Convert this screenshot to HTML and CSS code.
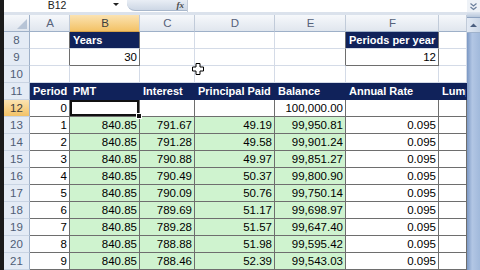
FILE: index.html
```html
<!DOCTYPE html>
<html lang="en">
<head>
    <meta charset="UTF-8">
    <title>Loan Amortization</title>
    <link rel="stylesheet" href="styles.css">
</head>
<body>
    <div class="window">
        <div class="edge"></div>
        <div class="main">
            <div class="formula-bar">
                <div class="name-box">B12</div>
                <div class="name-arrow"></div>
                <div class="fx-btn"><span class="fx">fx</span></div>
                <div class="formula-input"></div>
            </div>
            <div class="band"></div>

            <div class="sheet">
                <div class="row col-heads">
                    <div class="corner"></div>
                    <div class="ch">A</div>
                    <div class="ch active">B</div>
                    <div class="ch">C</div>
                    <div class="ch">D</div>
                    <div class="ch">E</div>
                    <div class="ch">F</div>
                    <div class="ch"></div>
                </div>

                <div class="row">
                    <div class="rh">8</div>
                    <div class="c dr"></div>
                    <div class="c hd dr">Years</div>
                    <div class="c"></div>
                    <div class="c"></div>
                    <div class="c dr"></div>
                    <div class="c hd dr">Periods per year</div>
                    <div class="c"></div>
                </div>
                <div class="row">
                    <div class="rh">9</div>
                    <div class="c dr"></div>
                    <div class="c num dr db">30</div>
                    <div class="c"></div>
                    <div class="c"></div>
                    <div class="c dr"></div>
                    <div class="c num dr db">12</div>
                    <div class="c"></div>
                </div>
                <div class="row">
                    <div class="rh">10</div>
                    <div class="c"></div>
                    <div class="c"></div>
                    <div class="c"></div>
                    <div class="c"></div>
                    <div class="c"></div>
                    <div class="c"></div>
                    <div class="c"></div>
                </div>

                <div class="row table head">
                    <div class="rh">11</div>
                    <div class="c hd">Period</div>
                    <div class="c hd">PMT</div>
                    <div class="c hd">Interest</div>
                    <div class="c hd">Principal Paid</div>
                    <div class="c hd">Balance</div>
                    <div class="c hd">Annual Rate</div>
                    <div class="c hd">Lump</div>
                </div>
                <div class="row table">
                    <div class="rh active">12</div>
                    <div class="c num">0</div>
                    <div class="c selected"><span class="handle"></span></div>
                    <div class="c"></div>
                    <div class="c"></div>
                    <div class="c num">100,000.00</div>
                    <div class="c"></div>
                    <div class="c"></div>
                </div>
                <div class="row table">
                    <div class="rh">13</div>
                    <div class="c num">1</div>
                    <div class="c num g">840.85</div>
                    <div class="c num g">791.67</div>
                    <div class="c num g">49.19</div>
                    <div class="c num g">99,950.81</div>
                    <div class="c num">0.095</div>
                    <div class="c"></div>
                </div>
                <div class="row table">
                    <div class="rh">14</div>
                    <div class="c num">2</div>
                    <div class="c num g">840.85</div>
                    <div class="c num g">791.28</div>
                    <div class="c num g">49.58</div>
                    <div class="c num g">99,901.24</div>
                    <div class="c num">0.095</div>
                    <div class="c"></div>
                </div>
                <div class="row table">
                    <div class="rh">15</div>
                    <div class="c num">3</div>
                    <div class="c num g">840.85</div>
                    <div class="c num g">790.88</div>
                    <div class="c num g">49.97</div>
                    <div class="c num g">99,851.27</div>
                    <div class="c num">0.095</div>
                    <div class="c"></div>
                </div>
                <div class="row table">
                    <div class="rh">16</div>
                    <div class="c num">4</div>
                    <div class="c num g">840.85</div>
                    <div class="c num g">790.49</div>
                    <div class="c num g">50.37</div>
                    <div class="c num g">99,800.90</div>
                    <div class="c num">0.095</div>
                    <div class="c"></div>
                </div>
                <div class="row table">
                    <div class="rh">17</div>
                    <div class="c num">5</div>
                    <div class="c num g">840.85</div>
                    <div class="c num g">790.09</div>
                    <div class="c num g">50.76</div>
                    <div class="c num g">99,750.14</div>
                    <div class="c num">0.095</div>
                    <div class="c"></div>
                </div>
                <div class="row table">
                    <div class="rh">18</div>
                    <div class="c num">6</div>
                    <div class="c num g">840.85</div>
                    <div class="c num g">789.69</div>
                    <div class="c num g">51.17</div>
                    <div class="c num g">99,698.97</div>
                    <div class="c num">0.095</div>
                    <div class="c"></div>
                </div>
                <div class="row table">
                    <div class="rh">19</div>
                    <div class="c num">7</div>
                    <div class="c num g">840.85</div>
                    <div class="c num g">789.28</div>
                    <div class="c num g">51.57</div>
                    <div class="c num g">99,647.40</div>
                    <div class="c num">0.095</div>
                    <div class="c"></div>
                </div>
                <div class="row table">
                    <div class="rh">20</div>
                    <div class="c num">8</div>
                    <div class="c num g">840.85</div>
                    <div class="c num g">788.88</div>
                    <div class="c num g">51.98</div>
                    <div class="c num g">99,595.42</div>
                    <div class="c num">0.095</div>
                    <div class="c"></div>
                </div>
                <div class="row table">
                    <div class="rh">21</div>
                    <div class="c num">9</div>
                    <div class="c num g">840.85</div>
                    <div class="c num g">788.46</div>
                    <div class="c num g">52.39</div>
                    <div class="c num g">99,543.03</div>
                    <div class="c num">0.095</div>
                    <div class="c"></div>
                </div>
            </div>

            <!-- mouse pointer over the sheet -->
            <svg class="pointer" width="12" height="12" viewBox="0 0 12 12">
                <path d="M4 0.5H8V4H11.5V8H8V11.5H4V8H0.5V4H4Z" fill="#fff" stroke="#000" stroke-width="1"/>
            </svg>
        </div>

        <div class="scrollbar">
            <div class="sb-top">
                <svg width="9" height="9" viewBox="0 0 9 9">
                    <path d="M1.5 1.5L4.5 4L7.5 1.5M1.5 5L4.5 7.5L7.5 5" fill="none" stroke="#6b7f9c" stroke-width="1.2"/>
                </svg>
            </div>
            <div class="sb-split"></div>
            <div class="sb-arrow">
                <svg width="9" height="9" viewBox="0 0 9 9">
                    <path d="M1 6L4.5 2.5L8 6Z" fill="#4b5f80"/>
                </svg>
            </div>
            <div class="sb-thumb"></div>
        </div>
    </div>
</body>
</html>
```

FILE: styles.css
```css
body {
    margin: 0;
    padding: 0;
    font-family: "Liberation Sans", Arial, sans-serif;
    font-size: 11.5px;
    color: #000;
    background-color: #1b1b1b;
    overflow: hidden;
}
.window {
    display: flex;
    width: 480px;
    height: 270px;
    overflow: hidden;
}
.edge {
    width: 4px;
    background-color: #1b1b1b;
}
.main {
    position: relative;
    width: 463px;
    background-color: #fff;
}
/* Formula bar */
.formula-bar {
    display: flex;
    height: 12px;
    background-color: #fff;
}
.name-box {
    width: 106px;
    text-align: center;
    line-height: 10px;
    font-size: 10.5px;
    color: #222;
}
.name-arrow {
    width: 0;
    height: 0;
    margin: 3px 8px 0 3px;
    border-left: 3px solid transparent;
    border-right: 3px solid transparent;
    border-top: 3px solid #222;
}
.fx-btn {
    display: flex;
    justify-content: flex-end;
    align-items: center;
    width: 60px;
    height: 11px;
    border-radius: 0 0 0 8px;
    background: linear-gradient(#e9eef5, #cdd7e5);
    border-bottom: 1px solid #a9b8cc;
    padding-right: 3px;
    box-sizing: border-box;
}
.fx {
    font-family: "Liberation Serif", serif;
    font-style: italic;
    font-weight: bold;
    font-size: 9px;
    line-height: 9px;
    color: #4a4a4a;
}
.formula-input {
    flex: 1;
    border-left: 1px solid #c3ccd9;
}
.band {
    height: 3px;
    background-color: #dbe2ec;
}
/* Sheet grid */
.row {
    display: grid;
    grid-template-columns: 26px 40px 70px 55px 80px 71px 93px 28px;
    height: 17px;
}
.c, .ch, .rh, .corner {
    box-sizing: border-box;
    border-right: 1px solid #d4dbe7;
    border-bottom: 1px solid #d4dbe7;
    line-height: 16px;
    padding: 0 2px 0 3px;
    white-space: nowrap;
    overflow: hidden;
}
.col-heads .ch {
    text-align: center;
    color: #56627a;
    background: linear-gradient(#f6f8fb, #e0e6ee);
    border-right: 1px solid #c1cbd9;
    border-bottom: 1px solid #9eb0c8;
}
.col-heads .ch.active {
    background: linear-gradient(#fbe3b2, #f3c266);
    border-bottom: 1px solid #d6a24a;
    color: #3d3d3d;
}
.corner {
    position: relative;
    background: linear-gradient(#f6f8fb, #dfe5ee);
    border-right: 1px solid #9eb0c8;
    border-bottom: 1px solid #9eb0c8;
}
.corner::after {
    content: "";
    position: absolute;
    right: 2px;
    bottom: 2px;
    border-left: 10px solid transparent;
    border-bottom: 10px solid #b7c4d6;
}
.rh {
    text-align: center;
    color: #4f5d76;
    background-color: #e4ebf5;
    border-right: 1px solid #9eb0c8;
    border-bottom: 1px solid #c9d4e3;
    padding: 0;
}
.rh.active {
    background: linear-gradient(#fbe3b2, #f3c266);
    color: #3d3d3d;
}
.num {
    text-align: right;
}
.hd {
    background-color: #10225a;
    color: #fff;
    font-weight: bold;
    font-size: 11px;
}
.dr {
    border-right-color: #6e6e6e;
}
.db {
    border-bottom-color: #6e6e6e;
}
/* Amortization table */
.table .c {
    border-right-color: #6e6e6e;
    border-bottom-color: #6e6e6e;
}
.table.head .c {
    border-right-color: #10225a;
    border-bottom-color: #10225a;
}
.g {
    background-color: #cff3cf;
}
.selected {
    position: relative;
    overflow: visible;
    box-shadow: inset 0 0 0 2px #111;
}
.handle {
    position: absolute;
    right: -3px;
    bottom: -3px;
    width: 4px;
    height: 4px;
    background-color: #111;
    border: 1px solid #fff;
}
.pointer {
    position: absolute;
    left: 188px;
    top: 63px;
}
/* Vertical scrollbar */
.scrollbar {
    display: flex;
    flex-direction: column;
    width: 13px;
    background-color: #fff;
}
.sb-top {
    height: 12px;
    display: flex;
    justify-content: center;
    align-items: center;
    background-color: #eef2f7;
}
.sb-split {
    height: 5px;
    background: linear-gradient(#dfe6f0, #b9c8dc);
    border-bottom: 1px solid #8ea3c1;
}
.sb-arrow {
    height: 14px;
    display: flex;
    justify-content: center;
    align-items: center;
    background: linear-gradient(to right, #e3eaf4, #cbd7e7);
    border-bottom: 1px solid #9fb2cc;
}
.sb-thumb {
    flex: 1;
    background: linear-gradient(to right, #7b98c4, #b2c6e4 40%, #a1b9db);
}
```
